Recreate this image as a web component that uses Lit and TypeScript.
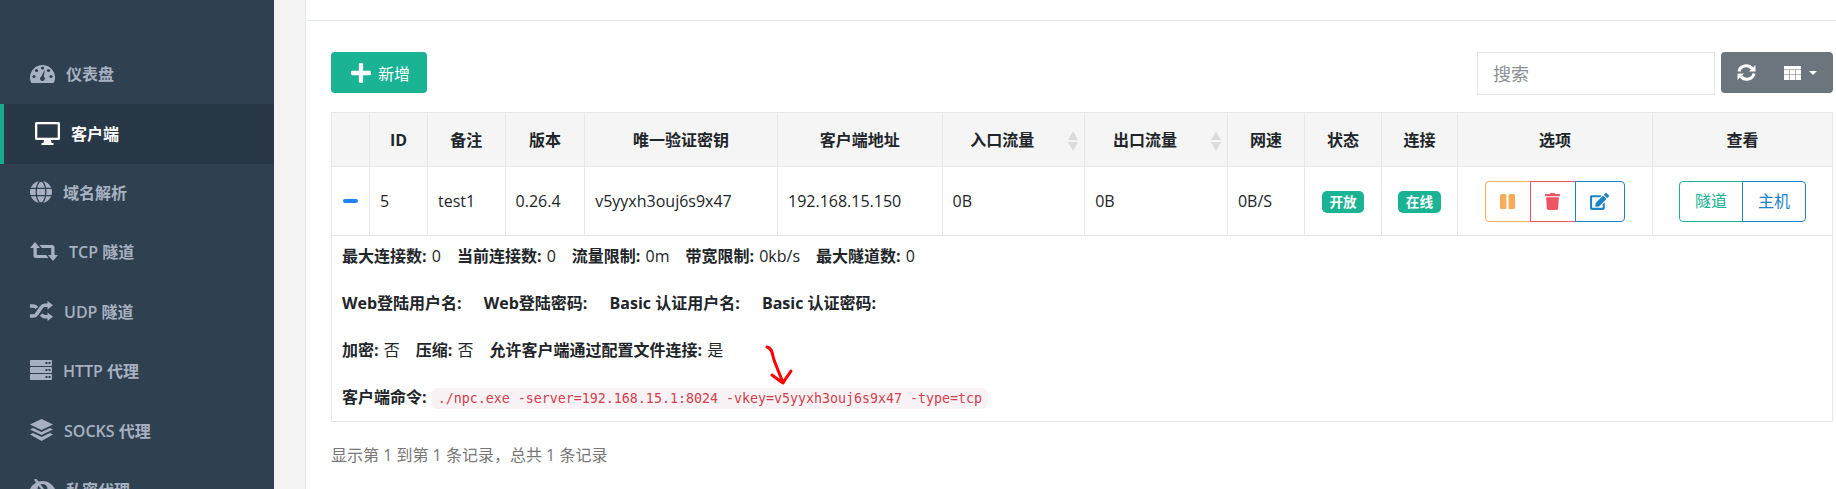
import { LitElement, html, css, svg } from 'lit';
import { customElement } from 'lit/decorators.js';

const BG = '#2f4050';

// sidebar icons, hand drawn to follow the font-icon shapes
const NAV = [
  {
    label: '仪表盘',
    icon: svg`<svg width="25" height="20" viewBox="0 0 25 20"><path fill="currentColor" d="M0 14.5a12.5 12.5 0 0 1 25 0c0 2-.5 3.9-1.4 5.5H1.4C.5 18.400 0 16.500 0 14.500z"/><g fill="${BG}"><circle cx="4" cy="13.500" r="1.600"/><circle cx="6.500" cy="7.500" r="1.600"/><circle cx="12.500" cy="5" r="1.600"/><circle cx="18.500" cy="7.500" r="1.600"/><circle cx="21" cy="13.500" r="1.600"/><path d="M14.800 6.500l-1 7.200a2.300 2.300 0 1 1-2.400-.2z"/></g></svg>`,
  },
  {
    label: '客户端',
    active: true,
    icon: svg`<svg width="25" height="23" viewBox="0 0 25 23"><path fill="currentColor" fill-rule="evenodd" d="M1.500 0h22A1.500 1.500 0 0 1 25 1.500v15a1.500 1.500 0 0 1-1.500 1.500H16l.6 3h1.900v2h-12v-2h1.900l.6-3H1.500A1.500 1.500 0 0 1 0 16.500v-15A1.500 1.500 0 0 1 1.500 0zM2.300 2.300v13.400h20.400V2.300z"/></svg>`,
  },
  {
    label: '域名解析',
    icon: svg`<svg width="22" height="22" viewBox="0 0 22 22"><circle cx="11" cy="11" r="11" fill="currentColor"/><g fill="none" stroke="${BG}" stroke-width="1.300"><ellipse cx="11" cy="11" rx="4.800" ry="11"/><path d="M0 7.300h22M0 14.700h22"/></g></svg>`,
  },
  {
    label: 'TCP 隧道',
    icon: svg`<svg width="28" height="19" viewBox="0 0 28 19"><g fill="currentColor"><path d="M5 0l5 6H6.800v7H16l2.500 3H6a2.500 2.500 0 0 1-2.500-2.500V6H0z"/><path d="M23 19l-5-6h3.200V6H12L9.500 3H22a2.500 2.500 0 0 1 2.500 2.500V13H28z"/></g></svg>`,
  },
  {
    label: 'UDP 隧道',
    icon: svg`<svg width="23" height="20" viewBox="0 0 23 20"><g fill="none" stroke="currentColor" stroke-width="3.600"><path d="M0 15h3.500c1.500 0 2.500-.8 3.300-2l4.400-6.500C12.300 5 13.500 4.300 15 4.300h3.500"/><path d="M0 5h3.500c1.500 0 2.500.8 3.300 2"/><path d="M11.200 13.500c1.100 1.500 2.300 2.200 3.800 2.200h3.500"/></g><g fill="currentColor"><path d="M17.500 0L23 4.300l-5.500 4.300z"/><path d="M17.500 11.400l5.500 4.300L17.500 20z"/></g></svg>`,
  },
  {
    label: 'HTTP 代理',
    icon: svg`<svg width="22" height="20" viewBox="0 0 22 20"><g fill="currentColor"><rect width="22" height="6" rx="1"/><rect y="7" width="22" height="6" rx="1"/><rect y="14" width="22" height="6" rx="1"/></g><g fill="${BG}"><rect x="15.500" y="2" width="2" height="2"/><rect x="18.500" y="2" width="2" height="2"/><rect x="15.500" y="9" width="2" height="2"/><rect x="18.500" y="9" width="2" height="2"/><rect x="15.500" y="16" width="2" height="2"/><rect x="18.500" y="16" width="2" height="2"/></g></svg>`,
  },
  {
    label: 'SOCKS 代理',
    icon: svg`<svg width="23" height="22" viewBox="0 0 23 22"><g fill="currentColor"><path d="M11.500 0L23 5.500 11.500 11 0 5.500z"/><path d="M3 9l8.500 4L20 9l3 1.500-11.500 5.500L0 10.500z"/><path d="M3 14l8.500 4 8.500-4 3 1.500L11.500 22 0 15.500z"/></g></svg>`,
  },
  {
    label: '私密代理',
    icon: svg`<svg width="25" height="20" viewBox="0 0 25 20"><path fill="currentColor" fill-rule="evenodd" d="M12.500 2C18 2 22.500 5.500 25 10c-2.500 4.500-7 8-12.500 8S2.500 14.500 0 10c2.500-4.500 7-8 12.500-8zm0 3a5 5 0 1 0 0 10 5 5 0 0 0 0-10z"/><path d="M5 0l15 20" stroke="currentColor" stroke-width="2.400"/></svg>`,
  },
];

const COLS = [38, 58, 77.6, 79.6, 192.8, 164.6, 142.6, 142.8, 77.2, 76.8, 76, 195, 180];
const HEADS = ['', 'ID', '备注', '版本', '唯一验证密钥', '客户端地址', '入口流量', '出口流量', '网速', '状态', '连接', '选项', '查看'];
const CELLS = ['5', 'test1', '0.26.4', 'v5yyxh3ouj6s9x47', '192.168.15.150', '0B', '0B', '0B/S'];

@customElement('app-root')
export class AppRoot extends LitElement {
  static styles = css`
    :host {
      display: flex;
      position: relative;
      width: 1836px;
      height: 489px;
      overflow: hidden;
      background: #f3f3f4;
      font-family: 'Open Sans', 'Noto Sans CJK SC', sans-serif;
      font-size: 16px;
      color: #212529;
    }

    .side {
      flex: none;
      width: 274px;
      padding-top: 45px;
      background: #2f4050;
      color: #a7b1c2;
      font-weight: 600;
    }

    .nav-item {
      display: flex;
      align-items: center;
      gap: 11px;
      height: 59.4px;
      padding: 0 0 3px 30px;
      box-sizing: border-box;
    }

    .nav-item.active {
      padding-left: 31px;
      padding-bottom: 2px;
      border-left: 4px solid #19aa8d;
      background: #293846;
      color: #fff;
    }

    .nav-item svg {
      flex: none;
      display: block;
    }

    .main {
      flex: 1;
      min-width: 0;
      margin-left: 31px;
      border-left: 1px solid #e7eaec;
      background: #fff;
    }

    .top-strip {
      height: 20px;
      border-bottom: 1px solid #e7eaec;
    }

    .body {
      width: 1502px;
      padding: 31px 0 0 25px;
    }

    .toolbar {
      display: flex;
      align-items: flex-start;
      height: 60px;
    }

    .btn-add {
      display: flex;
      align-items: center;
      gap: 7px;
      box-sizing: border-box;
      width: 96px;
      height: 41px;
      padding-left: 20px;
      border-radius: 4px;
      background: #1ab394;
      color: #fff;
    }

    .search {
      width: 238px;
      height: 43px;
      box-sizing: border-box;
      margin-left: auto;
      padding: 0 15px;
      border: 1px solid #e5e6e7;
      outline: none;
      font: inherit;
      font-size: 18px;
    }

    .search::placeholder {
      color: #8a8f94;
    }

    .tools {
      display: flex;
      align-items: center;
      box-sizing: border-box;
      width: 112px;
      height: 41px;
      margin-left: 6px;
      padding-left: 16px;
      border-radius: 4px;
      background: #6c757d;
      color: #fff;
    }

    .tools .grid {
      margin-left: 28px;
    }

    .tools .caret {
      margin-left: 8px;
      border: 4px solid transparent;
      border-top-color: #fff;
      border-bottom: 0;
    }

    table {
      width: 1502px;
      table-layout: fixed;
      border-collapse: collapse;
    }

    th,
    td {
      border: 1px solid #e7e7e7;
      padding: 0 10px;
      line-height: 24px;
    }

    th {
      position: relative;
      height: 54px;
      box-sizing: border-box;
      background: #f5f5f5;
      font-weight: 700;
      text-align: center;
    }

    th.sortable {
      padding-right: 32px;
    }

    .sort {
      position: absolute;
      top: 18px;
      right: 6px;
      display: flex;
      flex-direction: column;
      gap: 2px;
    }

    .sort i {
      display: block;
      border-left: 5.500px solid transparent;
      border-right: 5.500px solid transparent;
    }

    .sort i:first-child {
      border-bottom: 9px solid #dcdcdc;
    }

    .sort i:last-child {
      border-top: 9px solid #dcdcdc;
    }

    .row td {
      height: 69px;
      box-sizing: border-box;
    }

    td.center {
      text-align: center;
    }

    .minus {
      display: block;
      width: 15px;
      height: 4px;
      margin: 0 auto;
      border-radius: 2px;
      background: #1c84ff;
    }

    .badge {
      display: inline-block;
      padding: 0 7.500px;
      border-radius: 5px;
      background: #1ab394;
      color: #fff;
      font-size: 13.600px;
      font-weight: 700;
      line-height: 22px;
      vertical-align: middle;
    }

    .group {
      display: inline-flex;
      vertical-align: middle;
    }

    .seg {
      display: flex;
      align-items: center;
      justify-content: center;
      box-sizing: border-box;
      height: 41px;
      margin-left: -1px;
      border: 1px solid currentColor;
      background: #fff;
    }

    .seg:first-child {
      margin-left: 0;
      border-radius: 4px 0 0 4px;
    }

    .seg:last-child {
      border-radius: 0 4px 4px 0;
    }

    .seg.orange { width: 46px; color: #f8ac59; }
    .seg.red { width: 46px; color: #ed5565; }
    .seg.blue { width: 50px; color: #1c84c6; }
    .seg.teal { width: 64px; color: #1ab394; }
    .seg.sky { width: 64px; color: #1c84c6; }

    .detail {
      padding: 9px 10px 10px;
      line-height: 23.500px;
    }

    b {
      margin-right: 1px;
      font-weight: 700;
    }

    .wide b {
      margin-right: 2px;
    }

    code {
      padding: 3px 6px;
      border-radius: 5px;
      background: #f9f2f4;
      color: #cf3f4d;
      font-family: 'DejaVu Sans Mono', monospace;
      font-size: 13.300px;
    }

    .foot {
      margin-top: 21px;
      color: #777;
      line-height: 24px;
    }

    .arrow {
      position: absolute;
      left: 760px;
      top: 340px;
      pointer-events: none;
    }
  `;

  render() {
    return html`
      <nav class="side">
        ${NAV.map(
          (n) => html`<div class="nav-item ${n.active ? 'active' : ''}">${n.icon}<span>${n.label}</span></div>`,
        )}
      </nav>
      <div class="main">
        <div class="top-strip"></div>
        <div class="body">
          <div class="toolbar">
            <div class="btn-add">
              <svg width="20" height="20" viewBox="0 0 448 448" fill="currentColor"><path d="M416 176H272V32c0-17.700-14.300-32-32-32h-32c-17.700 0-32 14.300-32 32v144H32c-17.700 0-32 14.300-32 32v32c0 17.700 14.300 32 32 32h144v144c0 17.700 14.300 32 32 32h32c17.700 0 32-14.300 32-32V272h144c17.700 0 32-14.300 32-32v-32c0-17.700-14.300-32-32-32z"/></svg>
              <span>新增</span>
            </div>
            <input class="search" placeholder="搜索" />
            <div class="tools">
              <svg width="19" height="17" viewBox="0 0 19 17" fill="none" stroke="currentColor" stroke-width="3">
                <path d="M2 7.500A7.300 6.800 0 0 1 15 4.500"/>
                <path d="M17 9.500A7.300 6.800 0 0 1 4 12.500"/>
                <path d="M18 1v6.500h-6.500z" fill="currentColor" stroke="none" transform="translate(.5 0)"/>
                <path d="M1 16V9.500h6.500z" fill="currentColor" stroke="none" transform="translate(-.5 0)"/>
              </svg>
              <svg class="grid" width="17" height="14" viewBox="0 0 17 14" fill="currentColor">
                <rect width="17" height="3.500"/>
                <rect y="4" width="5.300" height="4.500"/><rect x="5.800" y="4" width="5.400" height="4.500"/><rect x="11.700" y="4" width="5.300" height="4.500"/>
                <rect y="9" width="5.300" height="5"/><rect x="5.800" y="9" width="5.400" height="5"/><rect x="11.700" y="9" width="5.300" height="5"/>
              </svg>
              <span class="caret"></span>
            </div>
          </div>
          <table>
            <colgroup>${COLS.map((w) => html`<col style="width:${w}px" />`)}</colgroup>
            <thead>
              <tr>
                ${HEADS.map((h, i) =>
                  i === 6 || i === 7
                    ? html`<th class="sortable">${h}<span class="sort"><i></i><i></i></span></th>`
                    : html`<th>${h}</th>`,
                )}
              </tr>
            </thead>
            <tbody>
              <tr class="row">
                <td><span class="minus"></span></td>
                ${CELLS.map((c) => html`<td>${c}</td>`)}
                <td class="center"><span class="badge">开放</span></td>
                <td class="center"><span class="badge">在线</span></td>
                <td class="center">
                  <div class="group">
                    <div class="seg orange">
                      <svg width="15" height="15" viewBox="0 0 448 448" fill="currentColor"><path d="M144 448H48c-26.500 0-48-21.500-48-48V48C0 21.500 21.500 0 48 0h96c26.500 0 48 21.500 48 48v352c0 26.500-21.500 48-48 48zm304-48V48c0-26.500-21.500-48-48-48h-96c-26.500 0-48 21.500-48 48v352c0 26.500 21.500 48 48 48h96c26.500 0 48-21.500 48-48z"/></svg>
                    </div>
                    <div class="seg red">
                      <svg width="15" height="17" viewBox="0 0 448 512" fill="currentColor"><path d="M432 32H312l-9.400-18.700A24 24 0 0 0 281.100 0H166.800a23.720 23.720 0 0 0-21.400 13.300L136 32H16A16 16 0 0 0 0 48v32a16 16 0 0 0 16 16h416a16 16 0 0 0 16-16V48a16 16 0 0 0-16-16zM53.200 467a48 48 0 0 0 47.900 45h245.800a48 48 0 0 0 47.900-45L416 128H32z"/></svg>
                    </div>
                    <div class="seg blue">
                      <svg width="19" height="17" viewBox="0 0 576 512" fill="currentColor"><path d="M402.600 83.200l90.200 90.200c3.800 3.800 3.800 10 0 13.800L274.400 405.600l-92.800 10.300c-12.400 1.400-22.900-9.100-21.500-21.500l10.300-92.800L388.800 83.200c3.800-3.800 10-3.800 13.800 0zm162-22.900l-48.800-48.800c-15.200-15.200-39.900-15.200-55.200 0l-35.400 35.400c-3.800 3.800-3.800 10 0 13.800l90.200 90.200c3.800 3.800 10 3.800 13.800 0l35.400-35.400c15.200-15.300 15.200-40 0-55.200zM384 346.200V448H64V128h229.800c3.200 0 6.200-1.300 8.500-3.500l40-40c7.600-7.600 2.200-20.500-8.500-20.500H48C21.500 64 0 85.500 0 112v352c0 26.500 21.500 48 48 48h352c26.500 0 48-21.500 48-48V306.200c0-10.700-12.900-16-20.500-8.500l-40 40c-2.200 2.300-3.500 5.300-3.500 8.500z"/></svg>
                    </div>
                  </div>
                </td>
                <td class="center">
                  <div class="group">
                    <div class="seg teal">隧道</div>
                    <div class="seg sky">主机</div>
                  </div>
                </td>
              </tr>
              <tr>
                <td class="detail" colspan="13">
                  <b>最大连接数:</b> 0&emsp;<b>当前连接数:</b> 0&emsp;<b>流量限制:</b> 0m&emsp;<b>带宽限制:</b> 0kb/s&emsp;<b>最大隧道数:</b> 0<br /><br />
                  <span class="wide"><b>Web登陆用户名:</b> &emsp;<b>Web登陆密码:</b> &emsp;<b>Basic 认证用户名:</b> &emsp;<b>Basic 认证密码:</b></span><br /><br />
                  <b>加密:</b> 否&emsp;<b>压缩:</b> 否&emsp;<b>允许客户端通过配置文件连接:</b> 是<br /><br />
                  <b>客户端命令:</b> <code>./npc.exe -server=192.168.15.1:8024 -vkey=v5yyxh3ouj6s9x47 -type=tcp</code>
                </td>
              </tr>
            </tbody>
          </table>
          <div class="foot">显示第 1 到第 1 条记录，总共 1 条记录</div>
        </div>
      </div>
      <svg class="arrow" width="40" height="50" viewBox="0 0 40 50" fill="none" stroke="#f00" stroke-width="3" stroke-linecap="round" stroke-linejoin="round">
        <path d="M7 7c4 1 5 4 6 9 1 6 5 13 10 27M12 35c4 3 8 6 11 8 2-4 5-7 8-12"/>
      </svg>
    `;
  }
}
